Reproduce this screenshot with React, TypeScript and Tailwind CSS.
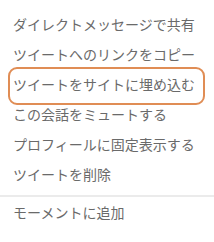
// ツイートのメニュー（埋め込み項目を強調表示）

const items = [
    'ダイレクトメッセージで共有',
    'ツイートへのリンクをコピー',
    'ツイートをサイトに埋め込む',
    'この会話をミュートする',
    'プロフィールに固定表示する',
    'ツイートを削除',
];

const App = () => {
    return (
        <div
            className="w-[214px] h-[242px] bg-white pt-[9px] text-[14px] text-[#6a6a6a]"
            style={{ fontFamily: '"Noto Sans CJK JP", "Noto Sans", sans-serif' }}
        >
            {items.map((label, i) => (
                <div key={label} className="relative h-[30px] flex items-center pl-[13px] whitespace-nowrap">
                    {label}
                    {/* 強調枠 */}
                    {i === 2 && (
                        <span className="absolute left-[8px] right-[9px] top-[-2px] bottom-[-6px] border-[2.5px] border-[#e08d55] rounded-[9px]" />
                    )}
                </div>
            ))}

            {/* 区切り線 */}
            <div className="mt-[6px] h-[2px] bg-[#ebebeb]" />

            <div className="h-[30px] flex items-center pl-[13px]">モーメントに追加</div>
        </div>
    );
}

export default App;
